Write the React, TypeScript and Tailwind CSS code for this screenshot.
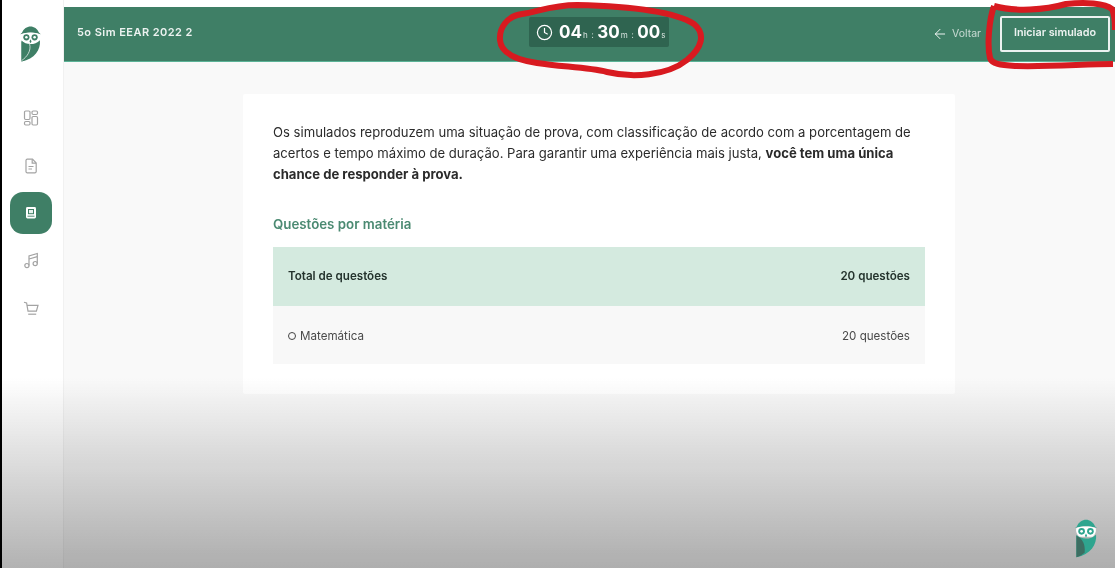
import { ArrowLeft, Clock } from 'lucide-react'

function Owl({ className, body, wing, cap, line }: { className: string; body: string; wing: string; cap: string; line?: boolean }) {
  return (
    <svg className={className} viewBox="0 0 24 42" fill="none">
      <path d="M2 8 C4 3 8 0.5 12 0.5 C16 0.5 20 3 22 8 L24 9.5 C16 7 8 7 0 9.5 Z" fill={cap} />
      <path d="M1.5 9.5 C8 7.5 16 7.5 22.5 9.5 C23.5 13 22 17 19 19 L5 19 C2 17 0.5 13 1.5 9.5 Z" fill="#fff" />
      <circle cx="7.2" cy="13.2" r="3.6" fill={cap} />
      <circle cx="16.8" cy="13.2" r="3.6" fill={cap} />
      <circle cx="7.2" cy="13.2" r="1.5" fill="#fff" />
      <circle cx="16.8" cy="13.2" r="1.5" fill="#fff" />
      <path d="M12 15.5 L13.2 18 L12 20 L10.8 18 Z" fill={cap} />
      <path d="M1.5 17 C4 20 8 21 12 21 C16 21 20 20 23 16.5 C24 28 17 38 1.5 41.5 Z" fill={body} />
      <path d="M1.5 41.5 L1.5 18 C8 21 11.5 27 10.5 36.5 C8 38.5 5 40.5 1.5 41.5 Z" fill={wing} />
      {line && <path d="M1.5 40.5 C8 36 13 29 11 21" stroke="#fff" strokeWidth="0.8" />}
    </svg>
  )
}

function DashIcon() {
  return (
    <svg width="16" height="16" viewBox="0 0 16 16" fill="none" stroke="currentColor" strokeWidth="1.2">
      <rect x="1.5" y="1" width="5.5" height="8.5" rx="1.2" />
      <rect x="1.5" y="11.5" width="5.5" height="3.5" rx="1.2" />
      <rect x="9" y="1" width="5.5" height="3.5" rx="1.2" />
      <rect x="9" y="6.5" width="5.5" height="8.5" rx="1.2" />
    </svg>
  )
}

function FileIcon() {
  return (
    <svg width="16" height="16" viewBox="0 0 16 16" fill="none" stroke="currentColor" strokeWidth="1.2">
      <path d="M3 2.5 A1.2 1.2 0 0 1 4.2 1.2 H9.5 L13.2 5 V13.6 A1.2 1.2 0 0 1 12 14.8 H4.2 A1.2 1.2 0 0 1 3 13.6 Z" />
      <path d="M9.2 1.5 V5.2 H13" />
      <path d="M5.5 8.5 H10.5 M5.5 11 H9" />
    </svg>
  )
}

function BookIcon() {
  return (
    <svg width="14" height="14" viewBox="0 0 14 14" fill="none">
      <rect x="2" y="1" width="10" height="11.5" rx="1.4" fill="#fff" />
      <rect x="4" y="3" width="6" height="5.2" fill="#3f7f66" />
      <rect x="5" y="4" width="4" height="3.2" fill="#e8f2ee" />
      <path d="M3.5 10.2 H10.5" stroke="#3f7f66" strokeWidth="0.9" />
    </svg>
  )
}

function MusicIcon() {
  return (
    <svg width="16" height="17" viewBox="0 0 16 17" fill="none" stroke="currentColor" strokeWidth="1.2">
      <path d="M6 13.5 V4 L14.3 1.5 V11.5" />
      <path d="M6 7 L14.3 4.6" />
      <circle cx="3.9" cy="13.6" r="2.1" />
      <circle cx="12.2" cy="11.6" r="2.1" />
    </svg>
  )
}

function CartIcon() {
  return (
    <svg width="16" height="15" viewBox="0 0 16 15" fill="none" stroke="currentColor" strokeWidth="1.2">
      <path d="M1 1.2 L3.6 2 L5 10.2 H13.4 L15 4.4 H3.4" />
      <path d="M5.2 13.2 H13.2" />
    </svg>
  )
}

function Timer({ value, unit }: { value: string; unit: string }) {
  return (
    <span className="flex items-baseline">
      <span className="text-[17px] font-bold text-white">{value}</span>
      <span className="ml-[1px] text-[8px] text-white/80">{unit}</span>
    </span>
  )
}

const navIcons = [DashIcon, FileIcon, BookIcon, MusicIcon, CartIcon]

export default function App() {
  return (
    <div className="relative flex h-[568px] w-[1115px] overflow-hidden bg-white font-['Inter',sans-serif]">
      <div className="w-[2px] bg-black" />

      <aside className="flex w-[62px] flex-col items-center border-r border-[#f1f1f1] bg-white pr-[4px]">
        <Owl className="mt-[26px] h-[36px] w-[21px]" body="#3f7f66" wing="#3f7f66" cap="#3f7f66" line />
        <nav className="mt-[34px] flex flex-col items-center gap-[5px]">
          {navIcons.map((Icon, i) => (
            <div
              key={i}
              className={
                i === 2
                  ? 'flex h-[42px] w-[42px] items-center justify-center rounded-[13px] bg-[#3f7f66] text-white'
                  : 'flex h-[43px] w-[42px] items-center justify-center text-[#a3a3a3]'
              }
            >
              <Icon />
            </div>
          ))}
        </nav>
      </aside>

      <main className="flex min-w-0 flex-1 flex-col pt-[7px]">
        <header className="relative flex h-[55px] shrink-0 items-center justify-between border-b border-[#5bb397] bg-[#3f7f66] pl-[13px] pr-[5px]">
          <span className="pb-[3px] text-[11px] font-semibold tracking-[0.45px] text-white/90">5o Sim EEAR 2022 2</span>

          <div className="absolute left-[465px] top-[10px] flex h-[30px] w-[140px] items-center gap-[6px] rounded-[2px] bg-[#2f6450] pl-[7px]">
            <Clock size={17} strokeWidth={1.7} className="text-white" />
            <div className="flex items-baseline gap-[3.5px] pt-[1px]">
              <Timer value="04" unit="h" />
              <span className="text-[9px] text-white/70">:</span>
              <Timer value="30" unit="m" />
              <span className="text-[9px] text-white/70">:</span>
              <Timer value="00" unit="s" />
            </div>
          </div>

          <div className="flex items-center">
            <ArrowLeft size={16} strokeWidth={1.5} className="text-white/90" />
            <span className="ml-[4px] pb-[1px] text-[10.5px] text-white/70">Voltar</span>
            <button className="ml-[19px] h-[36px] w-[110px] rounded-[2px] border-2 border-white/90 pb-[2px] text-[10.8px] font-semibold text-white/90">
              Iniciar simulado
            </button>
          </div>
        </header>

        <div className="flex-1 bg-[#f9f9f9] pl-[179px] pt-[32px]">
          <section className="h-[300px] w-[712px] rounded-[2px] bg-white px-[30px] pt-[28px]">
            <p className="text-[13.1px] leading-[21px] text-[#2b2b2b]">
              Os simulados reproduzem uma situação de prova, com classificação de acordo com a porcentagem de acertos e
              tempo máximo de duração. Para garantir uma experiência mais justa,{' '}
              <b className="font-bold">você tem uma única chance de responder à prova.</b>
            </p>
            <h2 className="mt-[30px] text-[13.3px] font-semibold text-[#4b8a72]">Questões por matéria</h2>
            <div className="mt-[12px] text-[11.6px]">
              <div className="flex h-[59px] items-center justify-between bg-[#d4eadf] px-[15px] font-semibold text-[#24332d]">
                <span>Total de questões</span>
                <span>20 questões</span>
              </div>
              <div className="flex h-[58px] items-center justify-between bg-[#f8f8f8] px-[15px] pt-[3px] text-[#4a4a4a]">
                <span className="flex items-center gap-[4px]">
                  <span className="h-[8px] w-[8px] rounded-full border-[1.5px] border-[#444]" />
                  Matemática
                </span>
                <span>20 questões</span>
              </div>
            </div>
          </section>
        </div>
      </main>

      {/* sombra do player de video sobre a parte de baixo */}
      <div className="pointer-events-none absolute inset-x-0 bottom-0 h-[190px] bg-gradient-to-b from-transparent to-[#b2b2b2] mix-blend-multiply" />

      <Owl className="absolute left-[1075px] top-[516px] h-[45px] w-[22px]" body="#2fa58f" wing="#3d6e62" cap="#2fa58f" />

      {/* marcacoes em vermelho */}
      <svg className="pointer-events-none absolute left-0 top-0" width="1115" height="568" fill="none">
        <path
          d="M522 14 C507 16 499 28 500 40 C501 54 517 60 537 63 C562 67 587 67 607 72 C632 78 667 76 687 60 C702 48 706 34 694 24 C672 10 622 6 577 5 C552 5 537 12 522 14 Z"
          stroke="#d81a20"
          strokeWidth="6"
        />
        <path
          d="M994 6 C989 20 987 45 990 58 C992 64 1000 65 1015 66 C1050 67 1085 64 1113 64 M994 6 C1015 12 1045 10 1066 4 C1085 2 1105 3 1112 9 C1115 15 1115 25 1115 30"
          stroke="#d81a20"
          strokeWidth="6"
        />
      </svg>
    </div>
  )
}
